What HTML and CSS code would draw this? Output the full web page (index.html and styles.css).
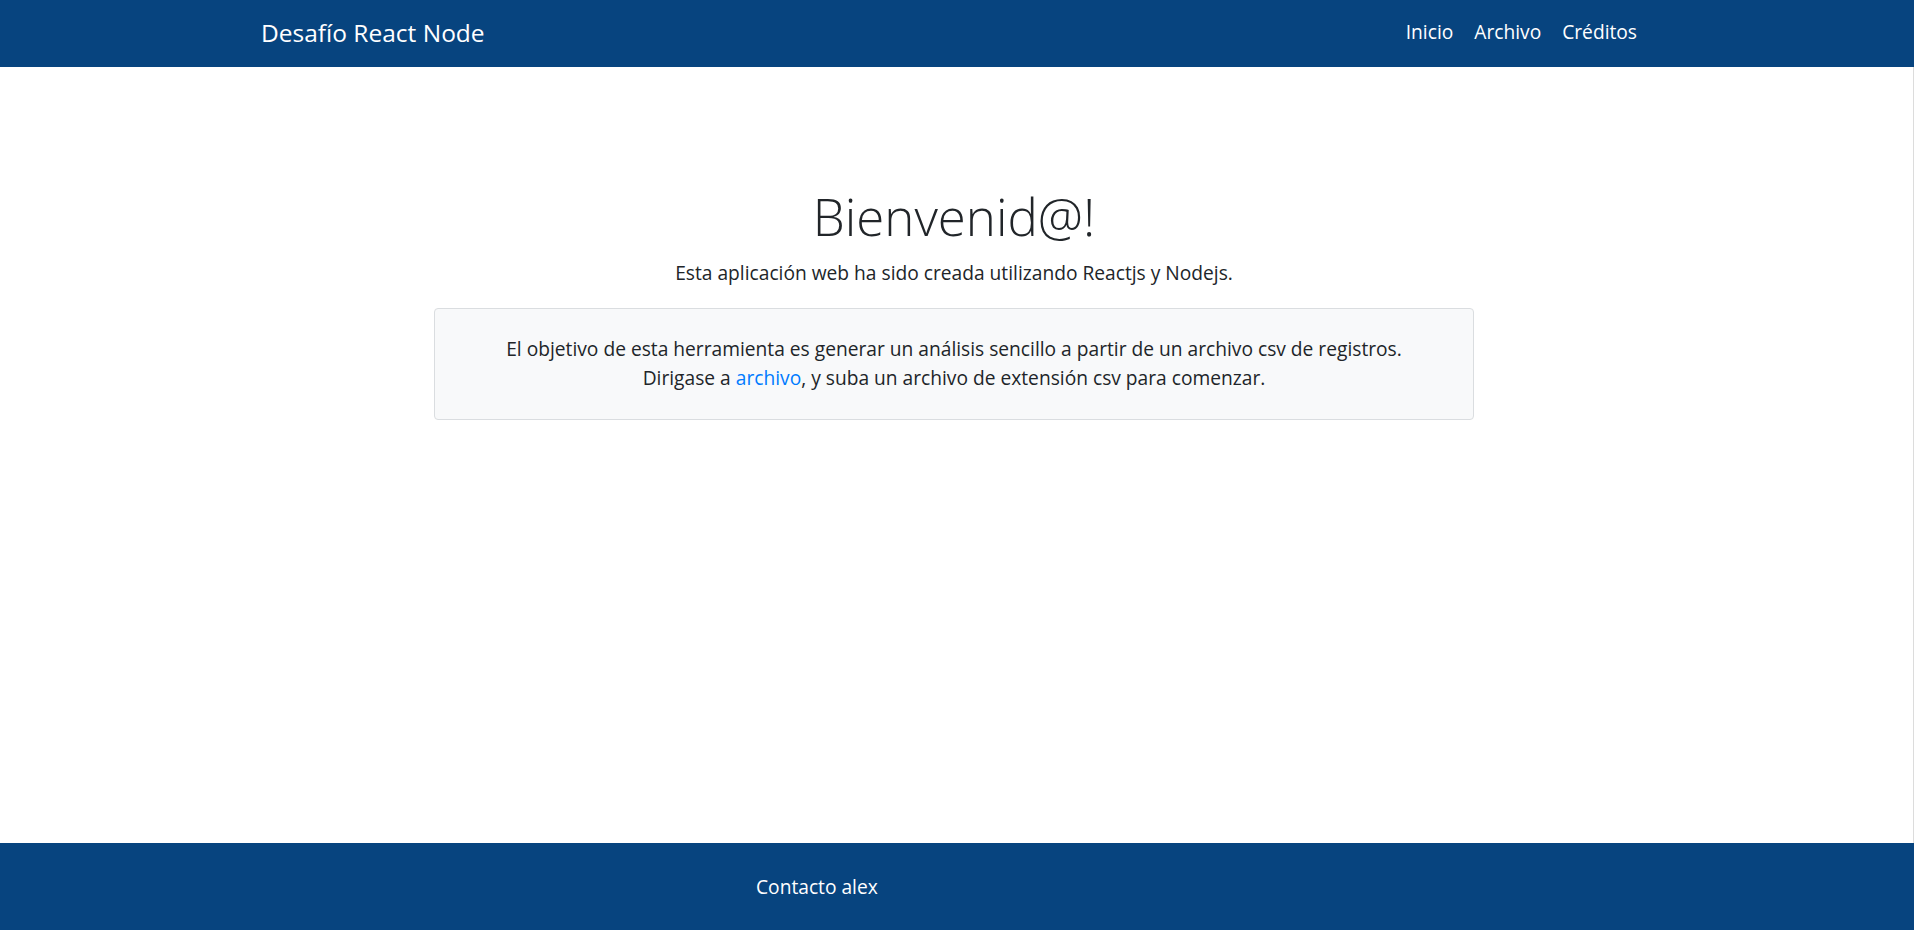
FILE: index.html
```html
<!DOCTYPE html>
<html lang="es">
<head>
<meta charset="utf-8">
<title>Desafío React Node</title>
<link rel="stylesheet" href="styles.css">
</head>
<body>
<header class="navbar">
  <div class="nav-container">
    <a class="brand" href="#">Desafío React Node</a>
    <nav class="nav-links">
      <a class="nav-link" href="#">Inicio</a>
      <a class="nav-link" href="#">Archivo</a>
      <a class="nav-link" href="#">Créditos</a>
    </nav>
  </div>
</header>
<main class="main">
  <div class="content">
    <h1 class="title">Bienvenid@!</h1>
    <p class="subtitle">Esta aplicación web ha sido creada utilizando Reactjs y Nodejs.</p>
    <div class="info-box">
      <p class="info-text">El objetivo de esta herramienta es generar un análisis sencillo a partir de un archivo csv de registros.<br>Dirigase a <a class="link" href="#">archivo</a>, y suba un archivo de extensión csv para comenzar.</p>
    </div>
  </div>
</main>
<footer class="footer">
  <span class="footer-text">Contacto alex</span>
</footer>
</body>
</html>
```
FILE: styles.css
```css
html, body {
  margin: 0;
  padding: 0;
}
body {
  font-family: "Open Sans", Lato, sans-serif;
  font-size: 19.2px;
  line-height: 1.5;
  color: #212529;
  background: #fff;
  display: flex;
  flex-direction: column;
  height: 100vh;
}
.navbar {
  background: #07447f;
  height: 67px;
  flex: none;
}
.nav-container {
  width: 1392px;
  margin: 0 auto;
  padding: 0 0 2px 0;
  box-sizing: border-box;
  height: 100%;
  display: flex;
  align-items: center;
  justify-content: space-between;
}
.brand {
  color: #fff;
  text-decoration: none;
  font-size: 24.5px;
  line-height: 36px;
}
.nav-links {
  display: flex;
}
.nav-link {
  color: #fff;
  text-decoration: none;
  font-size: 19.2px;
  padding: 0 10.5px;
  line-height: 28.8px;
}
.nav-link:last-child {
  padding-right: 16px;
}
.main {
  flex: 1;
  border-right: 1px solid #dcdcdc;
  padding-right: 5px;
  display: flex;
  justify-content: center;
}
.content {
  width: 1040px;
  text-align: center;
  padding-top: 119px;
}
.title {
  margin: 0;
  font-size: 51px;
  font-weight: 300;
  line-height: 1.2;
}
.subtitle {
  margin: 12px 0 0;
}
.info-box {
  margin-top: 20px;
  border: 1px solid #dadde0;
  border-radius: 4px;
  background: #f8f9fa;
  padding: 26px 20px;
}
.info-text {
  margin: 0;
}
.link {
  color: #007bff;
  text-decoration: none;
}
.footer {
  background: #07447f;
  height: 87px;
  flex: none;
  display: flex;
  align-items: center;
  padding: 2px 0 0 756px;
  box-sizing: border-box;
}
.footer-text {
  color: #fff;
  font-size: 19.2px;
}
```
